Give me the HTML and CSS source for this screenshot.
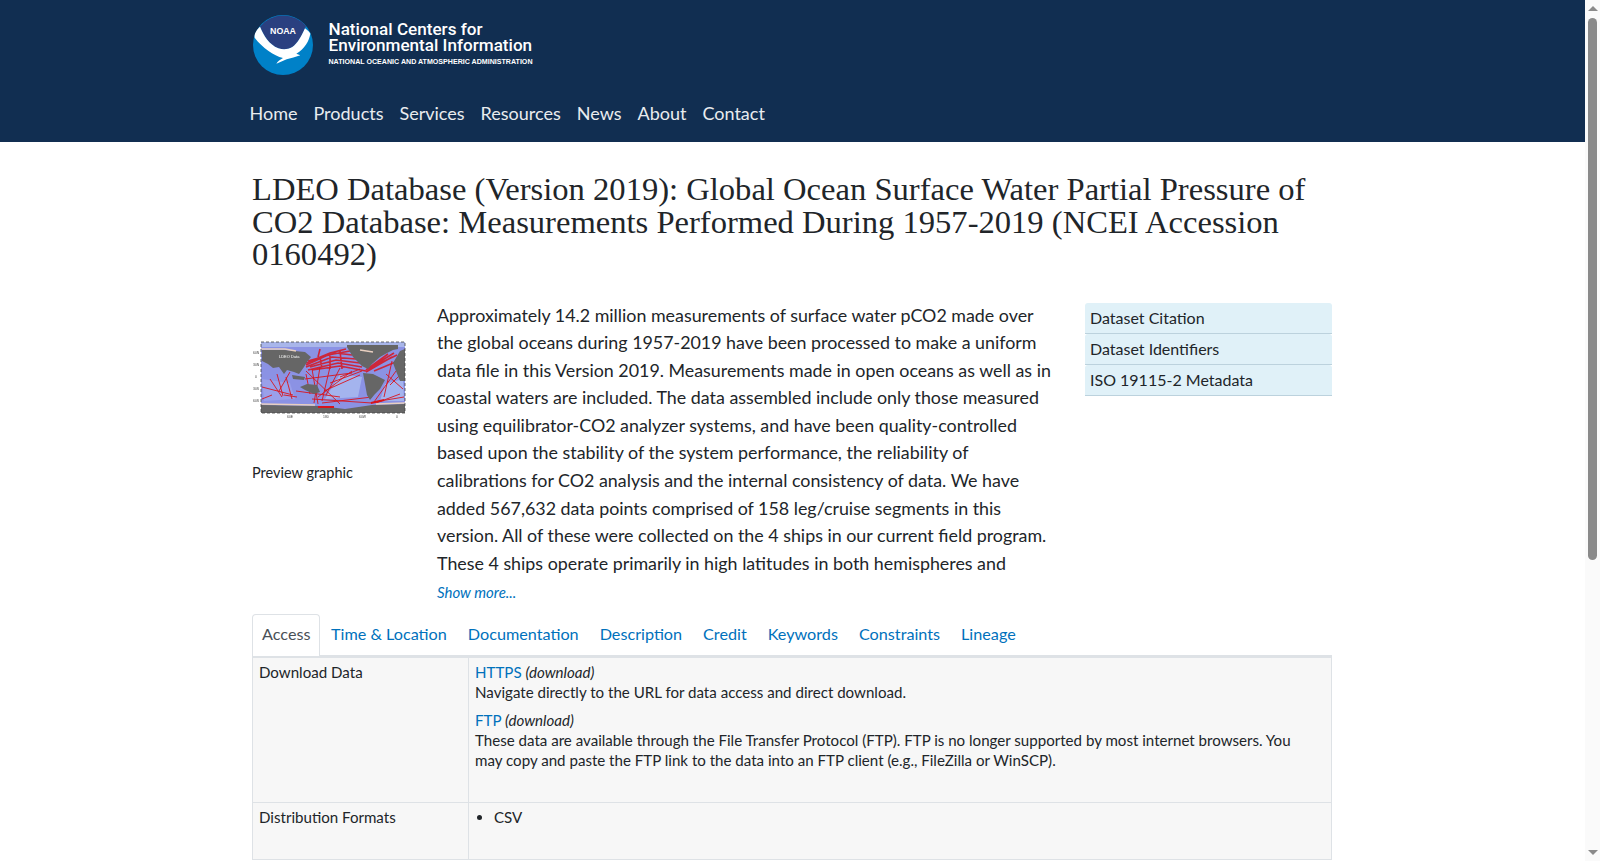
FILE: index.html
```html
<!DOCTYPE html>
<html lang="en">
<head>
    <meta charset="UTF-8">
    <meta name="viewport" content="width=device-width, initial-scale=1.0">
    <title>LDEO Database (Version 2019)</title>
    <link rel="stylesheet" href="styles.css">
</head>
<body>
    <div class="page">
        <header class="site-header">
            <div class="wrap">
                <a class="brand" href="#">
                    <svg class="brand-logo" viewBox="0 0 180 180" width="60" height="60" aria-hidden="true">
                        <circle cx="90" cy="90" r="90" fill="#0081c8"/>
                        <path d="M21 35 A90 90 0 0 1 159 33 L156 40 C146 62 134 86 118 96 C104 104 90 104 76 100 C48 88 32 62 21 35 Z" fill="#2a4080"/>
                        <path d="M21 35 C32 62 48 88 76 100 C90 104 104 104 118 96 C134 86 146 62 156 40 C164 46 169 50 172 56 C168 78 156 100 130 116 L142 121 C128 126 114 130 101 133 L70 146 C74 138 82 134 90 129 C62 122 28 98 5 68 C3 58 10 44 21 35 Z" fill="#fff"/>
                        <text class="noaa-mark" x="51" y="58" textLength="78" lengthAdjust="spacingAndGlyphs">NOAA</text>
                    </svg>
                    <span class="brand-text">
                        <span class="brand-name">National Centers for</span>
                        <span class="brand-name">Environmental Information</span>
                        <span class="brand-sub">NATIONAL OCEANIC AND ATMOSPHERIC ADMINISTRATION</span>
                    </span>
                </a>
                <nav class="main-nav">
                    <a href="#">Home</a>
                    <a href="#">Products</a>
                    <a href="#">Services</a>
                    <a href="#">Resources</a>
                    <a href="#">News</a>
                    <a href="#">About</a>
                    <a href="#">Contact</a>
                </nav>
            </div>
        </header>

        <main class="wrap">
            <h1>LDEO Database (Version 2019): Global Ocean Surface Water Partial Pressure of CO2 Database: Measurements Performed During 1957-2019 (NCEI Accession 0160492)</h1>

            <div class="intro">
                <div class="preview">
                    <svg class="preview-map" viewBox="252 338 158 85" width="158" height="85" aria-hidden="true">
                        <rect x="261" y="343" width="144" height="71" fill="#8b92e4"/>
                        <!-- lighter water -->
                        <path d="M340 375 L362 378 L358 398 L325 400 Z" fill="#a4b4ee"/>
                        <path d="M385 385 L403 380 L404 402 L380 402 Z" fill="#a4b4ee"/>
                        <path d="M262 380 L290 384 L295 400 L264 402 Z" fill="#9aa0ea"/>
                        <path d="M261 343 H405 V348 H261 Z" fill="#a9b6ea"/>
                        <!-- tracks -->
                        <g class="tracks">
                            <path d="M306 372 L340 405 M312 370 L318 405 M320 368 L314 404 M330 368 L322 402 M340 369 L326 396 M352 372 L318 398 M360 376 L324 392 M306 375 L310 395 M297 398 L284 396 M293 396 L262 388 M283 397 L277 375 M279 392 L290 373 M270 380 L282 398 M312 400 L372 404 M374 403 L396 372 M380 402 L404 398 M386 375 L403 390 M376 404 L400 395 M384 398 L392 362 M340 378 L360 370 M305 380 L352 374 M330 384 L362 372 M322 404 L372 398 M296 392 L340 398 M272 396 L262 400 M286 378 L292 400 M390 386 L404 372"/>
                        </g>
                        <g class="tracks-dense">
                            <path d="M306 366 L328 356 L350 352 M306 364 L330 354 L346 350 M308 362 L336 354 L352 356 M306 368 L332 358 L356 360 M310 368 L336 361 L360 364 M308 371 L338 364 L362 368 M312 371 L340 367 L366 372 M320 358 L322 370 M330 354 L330 370 M340 352 L342 370 M320 350 L318 358 M366 371 L388 355 M368 370 L394 354 M372 368 L397 356 M366 373 L392 358 M374 372 L398 362"/>
                        </g>
                        <!-- land -->
                        <path class="land" d="M262 351 L285 351 L305 353 L311 358 L307 363 L304 368 L299 375 L294 373 L287 371 L284 375 L279 368 L273 369 L268 365 L262 362 Z"/>
                        <path class="land" d="M292 376 L305 378 L304 381 L293 380 Z"/>
                        <path class="land" d="M300 388 L307 385 L317 386 L320 393 L314 395 L305 391 Z"/>
                        <path class="land" d="M347 346 L398 346 L398 350 L393 351 L387 354 L380 358 L372 365 L368 370 L362 367 L353 358 L347 348 Z"/>
                        <path class="land" d="M363 374 L373 375 L385 381 L380 390 L375 395 L370 401 L367 396 L365 385 Z"/>
                        <path class="land" d="M400 352 L405 350 L405 382 L400 382 L396 372 L393 364 Z"/>
                        <path class="land" d="M261 406 L320 407 L345 410 L372 406 L405 405 V414 H261 Z"/>
                        <!-- ice edge -->
                        <path d="M261 350 L285 350 L296 352 M360 351 L373 353 M261 405 L315 406 M376 405 L405 404" class="ice"/>
                        <path d="M318 408 L334 408 M371 404 L384 401" class="tracks-heavy"/>
                        <rect x="261" y="343" width="144" height="71" fill="none" stroke="#444" stroke-width="0.8" stroke-dasharray="3 2"/>
                        <text class="map-label" x="279" y="359">LDEO Data</text>
                        <text class="map-tick" x="253" y="355">60N</text>
                        <text class="map-tick" x="253" y="367">30N</text>
                        <text class="map-tick" x="255" y="379">0</text>
                        <text class="map-tick" x="253" y="391">30S</text>
                        <text class="map-tick" x="253" y="403">60S</text>
                        <text class="map-tick" x="287" y="419">60E</text>
                        <text class="map-tick" x="323" y="419">180</text>
                        <text class="map-tick" x="359" y="419">60W</text>
                        <text class="map-tick" x="396" y="419">0</text>
                    </svg>
                    <p class="preview-caption">Preview graphic</p>
                </div>
                <div class="summary">
                    <p class="summary-text">Approximately 14.2 million measurements of surface water pCO2 made over the global oceans during 1957-2019 have been processed to make a uniform data file in this Version 2019. Measurements made in open oceans as well as in coastal waters are included. The data assembled include only those measured using equilibrator-CO2 analyzer systems, and have been quality-controlled based upon the stability of the system performance, the reliability of calibrations for CO2 analysis and the internal consistency of data. We have added 567,632 data points comprised of 158 leg/cruise segments in this version. All of these were collected on the 4 ships in our current field program. These 4 ships operate primarily in high latitudes in both hemispheres and</p>
                    <a class="show-more" href="#">Show more...</a>
                </div>
                <ul class="side-links">
                    <li>Dataset Citation</li>
                    <li>Dataset Identifiers</li>
                    <li>ISO 19115-2 Metadata</li>
                </ul>
            </div>

            <ul class="tabs">
                <li class="active"><a href="#">Access</a></li>
                <li><a href="#">Time &amp; Location</a></li>
                <li><a href="#">Documentation</a></li>
                <li><a href="#">Description</a></li>
                <li><a href="#">Credit</a></li>
                <li><a href="#">Keywords</a></li>
                <li><a href="#">Constraints</a></li>
                <li><a href="#">Lineage</a></li>
            </ul>

            <table class="info-table">
                <tr class="row-download">
                    <th>Download Data</th>
                    <td>
                        <p><a href="#">HTTPS</a> <em>(download)</em><br>Navigate directly to the URL for data access and direct download.</p>
                        <p><a href="#">FTP</a> <em>(download)</em><br>These data are available through the File Transfer Protocol (FTP). FTP is no longer supported by most internet browsers. You may copy and paste the FTP link to the data into an FTP client (e.g., FileZilla or WinSCP).</p>
                    </td>
                </tr>
                <tr class="row-formats">
                    <th>Distribution Formats</th>
                    <td><ul><li>CSV</li></ul></td>
                </tr>
            </table>
        </main>
    </div>
    <div class="scrollbar">
        <span class="arrow-up"></span>
        <span class="thumb"></span>
        <span class="arrow-down"></span>
    </div>
</body>
</html>
```

FILE: styles.css
```css
body {
    display: flex;
    height: 100vh;
    margin: 0;
    overflow: hidden;
    font-family: 'Lato', sans-serif;
    font-size: 16px;
    color: #212529;
    background: #fff;
}
a {
    color: #0071bc;
    text-decoration: none;
}
.page {
    flex: 1;
    min-width: 0;
    padding-right: 1px;
    overflow: hidden;
}
.wrap {
    width: 1080px;
    margin: 0 auto;
}

/* header */
.site-header {
    height: 142px;
    background: #112e51;
    margin-right: -1px;
}
.site-header .wrap {
    display: flex;
    flex-direction: column;
}
.brand {
    display: flex;
    gap: 16px;
    padding-top: 15px;
    color: #fff;
}
.brand-logo {
    flex: none;
}
.noaa-mark {
    font-family: 'Liberation Sans', sans-serif;
    font-size: 27px;
    font-weight: 700;
    fill: #fff;
}
.brand-text {
    display: flex;
    flex-direction: column;
    padding-top: 6px;
}
.brand-name {
    font-family: 'Roboto', sans-serif;
    font-weight: 500;
    font-size: 17.1px;
    line-height: 16px;
}
.brand-sub {
    font-family: 'Liberation Sans', sans-serif;
    font-weight: 700;
    font-size: 7.1px;
    line-height: 10px;
    margin-top: 4px;
}
.main-nav {
    display: flex;
    margin: 24px 0 0 -11px;
}
.main-nav a {
    padding: 0 8px;
    font-size: 18px;
    line-height: 28px;
    color: #e9ecef;
}

/* title and summary */
h1 {
    margin: 31px 0 0;
    font-family: 'Liberation Serif', serif;
    font-weight: 400;
    font-size: 32.6px;
    line-height: 32.5px;
    color: #212529;
}
.intro {
    display: flex;
    margin-top: 29px;
}
.preview {
    flex: none;
    width: 185px;
    padding-top: 37px;
}
.preview-map {
    display: block;
    filter: blur(0.5px);
}
.tracks path {
    fill: none;
    stroke: #d8141c;
    stroke-width: 0.9;
}
.tracks-dense path {
    fill: none;
    stroke: #d8141c;
    stroke-width: 1.6;
    opacity: 0.85;
}
.tracks-heavy {
    fill: none;
    stroke: #d8141c;
    stroke-width: 2;
}
.land {
    fill: #666;
}
.ice {
    fill: none;
    stroke: #e8cfc0;
    stroke-width: 1.6;
}
.map-label {
    font-family: 'Liberation Sans', sans-serif;
    font-size: 4px;
    fill: #fff;
}
.map-tick {
    font-family: 'Liberation Sans', sans-serif;
    font-size: 3.4px;
    fill: #444;
}
.preview-caption {
    margin: 41px 0 0;
    font-size: 14.5px;
    line-height: 20px;
}
.summary {
    flex: none;
    width: 618px;
}
.summary-text {
    margin: 0;
    padding-top: 2px;
    font-size: 17.85px;
    line-height: 27.6px;
}
.show-more {
    display: block;
    margin-top: 3px;
    font-size: 15px;
    line-height: 24px;
    font-style: italic;
}
.side-links {
    flex: none;
    width: 247px;
    margin: 3px 0 0 30px;
    padding: 0;
    list-style: none;
    align-self: flex-start;
}
.side-links li {
    height: 30px;
    padding: 0 5px;
    font-size: 16px;
    line-height: 30px;
    background: #e0f1f8;
    border-bottom: 1px solid #bcd2dd;
    border-radius: 3px 3px 0 0;
}

/* tabs */
.tabs {
    display: flex;
    margin: 10px 0 0;
    padding: 0;
    list-style: none;
    border-bottom: 2px solid #dee2e6;
}
.tabs a {
    display: block;
    padding: 0 9.5px 4px;
    font-size: 16.2px;
    line-height: 37px;
}
.tabs li {
    border: 1px solid transparent;
    border-bottom: 0;
    margin-bottom: -1px;
}
.tabs .active {
    background: #fff;
    border-color: #dee2e6;
    border-radius: 4px 4px 0 0;
}
.tabs .active a {
    color: #495057;
    padding: 0 9px 4px;
}

/* table */
.info-table {
    width: 100%;
    border-collapse: collapse;
    background: #f7f7f7;
    font-size: 15.1px;
    line-height: 20px;
}
.info-table th,
.info-table td {
    padding: 4px 6px;
    vertical-align: top;
    border: 1px solid #dee2e6;
    text-align: left;
    font-weight: 400;
}
.info-table th {
    width: 203px;
}
.info-table td {
    padding-right: 24px;
}
.info-table p {
    margin: 0 0 8px;
}
.row-download {
    height: 145px;
}
.row-formats {
    height: 57px;
}
.info-table ul {
    margin: 0;
    padding-left: 19px;
}

/* scrollbar */
.scrollbar {
    flex: none;
    display: flex;
    flex-direction: column;
    align-items: center;
    width: 15px;
    height: 100%;
    padding: 6px 0;
    box-sizing: border-box;
    background: #fafafa;
}
.arrow-up,
.arrow-down {
    width: 0;
    height: 0;
    border-left: 5px solid transparent;
    border-right: 5px solid transparent;
}
.arrow-up {
    border-bottom: 5px solid #8a8a8a;
}
.arrow-down {
    margin-top: auto;
    border-top: 5px solid #8a8a8a;
}
.thumb {
    width: 9px;
    height: 542px;
    margin-top: 7px;
    background: #8a8a8a;
    border-radius: 5px;
}
```
